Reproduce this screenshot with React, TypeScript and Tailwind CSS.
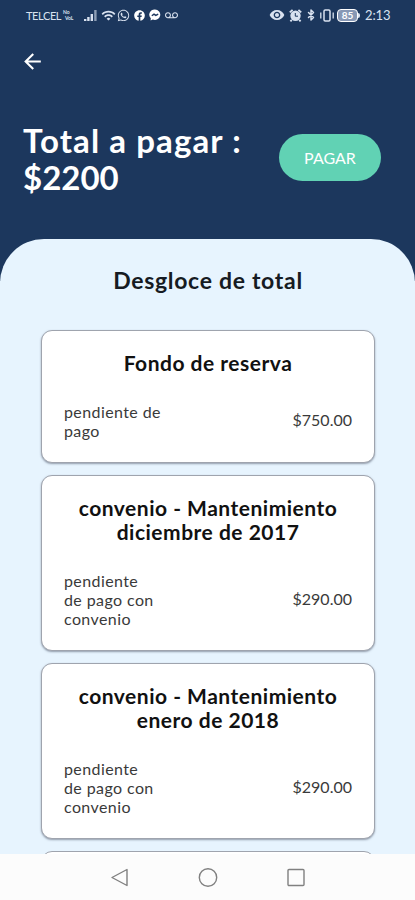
import { Bluetooth } from "lucide-react";
import { FaFacebook, FaWhatsapp } from "react-icons/fa";
import { MdArrowBack, MdRemoveRedEye, MdVoicemail, MdWifi } from "react-icons/md";

interface Charge {
  title: string[];
  status: string[];
  amount: string;
}

const charges: Charge[] = [
  {
    title: ["Fondo de reserva"],
    status: ["pendiente de", "pago"],
    amount: "$750.00",
  },
  {
    title: ["convenio - Mantenimiento", "diciembre de 2017"],
    status: ["pendiente", "de pago con", "convenio"],
    amount: "$290.00",
  },
  {
    title: ["convenio - Mantenimiento", "enero de 2018"],
    status: ["pendiente", "de pago con", "convenio"],
    amount: "$290.00",
  },
];

function SignalBars() {
  return (
    <svg className="ml-[9px] h-[12px] w-[13px]" viewBox="0 0 13 12" fill="currentColor">
      <path d="M0 10h2.4v2H0zM3.2 8h2.4v4H3.2zM6.6 5H9v7H6.6z" />
      <path d="M10.2 1h2.4v11h-2.4z" opacity=".6" />
    </svg>
  );
}

function MessengerIcon() {
  return (
    <svg className="ml-[4px] h-[12px] w-[12px]" viewBox="0 0 12 12">
      <path d="M6 .5a5.4 5.2 0 1 1-2.2 10L1.6 11.5l.2-2.2A5.4 5.2 0 0 1 6 .5z" fill="white" />
      <path d="m2.8 6.8 2.2-1.6 1.8 1.2 2.4-1.2" fill="none" stroke="#1c375d" strokeWidth="1.4" />
    </svg>
  );
}

function AlarmIcon() {
  return (
    <svg className="ml-[4px] h-[13px] w-[13px]" viewBox="0 0 13 13">
      <circle cx="6.5" cy="6.8" r="5.2" fill="currentColor" />
      <path
        d="M.8 3.4 3.6.9M12.2 3.4 9.4.9M2.8 10.8l-1.4 1.5M10.2 10.8l1.4 1.5"
        stroke="currentColor"
        strokeWidth="1.9"
      />
      <path d="M6.3 4v3.2H9" fill="none" stroke="#1c375d" strokeWidth="1" />
    </svg>
  );
}

function VibrateIcon() {
  return (
    <svg className="ml-[3px] h-[13px] w-[14px]" viewBox="0 0 14 13" fill="none" stroke="currentColor">
      <rect x="4" y="1" width="6" height="11" rx="1.2" strokeWidth="1.5" />
      <path d="M.8 3.5v6M13.2 3.5v6" strokeWidth="1.3" />
    </svg>
  );
}

function StatusBar() {
  return (
    <div className="flex h-[30px] items-center pr-[24px] pl-[26px] text-[#d9e2f0]">
      <span className="w-[36px] text-[11px] leading-none tracking-[-0.4px]">TELCEL</span>
      <span className="ml-px flex w-[12px] flex-col text-[5px] leading-[6px] font-bold">
        <span>No</span>
        <span className="pl-[2px]">VoL</span>
      </span>
      <SignalBars />
      <MdWifi className="ml-[4px] h-[15px] w-[15px]" />
      <FaWhatsapp className="ml-px h-[13px] w-[13px]" />
      <FaFacebook className="ml-[4px] h-[11px] w-[11px] text-white" />
      <MessengerIcon />
      <MdVoicemail className="ml-[4px] h-[13px] w-[13px]" />
      <div className="ml-auto flex items-center">
        <MdRemoveRedEye className="h-[16px] w-[16px]" />
        <AlarmIcon />
        <Bluetooth className="ml-[3px] h-[14px] w-[12px]" strokeWidth={3} />
        <VibrateIcon />
        <span className="ml-[3px] flex h-[13px] w-[21px] items-center justify-center rounded-[4px] border border-current bg-[#8798b5] text-[10px] leading-none font-bold text-white">
          85
        </span>
        <span className="h-[5px] w-[2px] rounded-r-full bg-current" />
        <span className="ml-[5px] w-[26px] text-[13px] leading-none tracking-[-0.1px] whitespace-nowrap">
          2:13
        </span>
      </div>
    </div>
  );
}

function ChargeCard({ charge }: { charge: Charge }) {
  return (
    <article className="rounded-[11px] border border-[#9fa4ae] bg-white px-[22px] pt-[20px] pb-[22.3px] shadow-[0_1px_2px_rgba(60,70,90,0.5)]">
      <h2 className="text-center text-[21px] leading-[24px] font-bold tracking-[0.5px] text-[#111]">
        {charge.title.map((line) => (
          <span key={line} className="block whitespace-nowrap">
            {line}
          </span>
        ))}
      </h2>
      <div className="mt-[27px] flex items-center justify-between text-[16px] leading-[19px] text-[#3a3a3a]">
        <p className="tracking-[0.4px]">
          {charge.status.map((line) => (
            <span key={line} className="block whitespace-nowrap">
              {line}
            </span>
          ))}
        </p>
        <span className="-mt-[2px]">{charge.amount}</span>
      </div>
    </article>
  );
}

function NavigationBar() {
  return (
    <nav className="flex h-[46px] shrink-0 items-center justify-center gap-[68px] bg-[#fcfcfc] text-[#808080]">
      <svg className="h-[20px] w-[20px]" viewBox="0 0 20 20" fill="none" stroke="currentColor" strokeWidth="1.4" strokeLinejoin="round">
        <path d="M17 2.5v16L2 10.5z" />
      </svg>
      <svg className="h-[20px] w-[20px]" viewBox="0 0 20 20" fill="none" stroke="currentColor" strokeWidth="1.4">
        <circle cx="10" cy="10.5" r="8.7" />
      </svg>
      <svg className="h-[20px] w-[20px]" viewBox="0 0 20 20" fill="none" stroke="currentColor" strokeWidth="1.4">
        <rect x="2" y="2.5" width="16" height="16" rx="1" />
      </svg>
    </nav>
  );
}

export default function App() {
  return (
    <div className="flex h-[900px] w-[415px] flex-col overflow-hidden bg-[#1c375d] font-['Lato',sans-serif]">
      <header className="h-[239px] shrink-0">
        <StatusBar />
        <button className="mt-[19px] ml-[20px] block text-white">
          <MdArrowBack className="h-[25px] w-[25px]" />
        </button>
        <div className="mt-[48px] flex items-start justify-between pr-[34px] pl-[23px]">
          <h1 className="text-[33px] leading-[37px] font-bold whitespace-nowrap text-white">
            <span className="block tracking-[1.1px]">Total a pagar :</span>
            <span className="block">$2200</span>
          </h1>
          <button className="mt-[12px] h-[47px] w-[102px] rounded-full bg-[#61d2b4] text-[16px] text-white">
            PAGAR
          </button>
        </div>
      </header>
      <div className="min-h-0 flex-1 bg-[linear-gradient(#1c375d_42px,#e7f4fe_42px)]">
        <main className="h-full overflow-hidden rounded-t-[44px] bg-[#e7f4fe] pr-[40px] pl-[41px]">
          <h2 className="mt-[28px] text-center text-[23px] leading-[26px] font-bold tracking-[0.7px] text-[#161b22]">
            Desgloce de total
          </h2>
          <div className="mt-[36.6px] flex flex-col gap-[12px]">
            {charges.map((charge) => (
              <ChargeCard key={charge.title.join(" ")} charge={charge} />
            ))}
            <div className="h-[60px] rounded-[11px] border border-[#9fa4ae] bg-white" />
          </div>
        </main>
      </div>
      <NavigationBar />
    </div>
  );
}
